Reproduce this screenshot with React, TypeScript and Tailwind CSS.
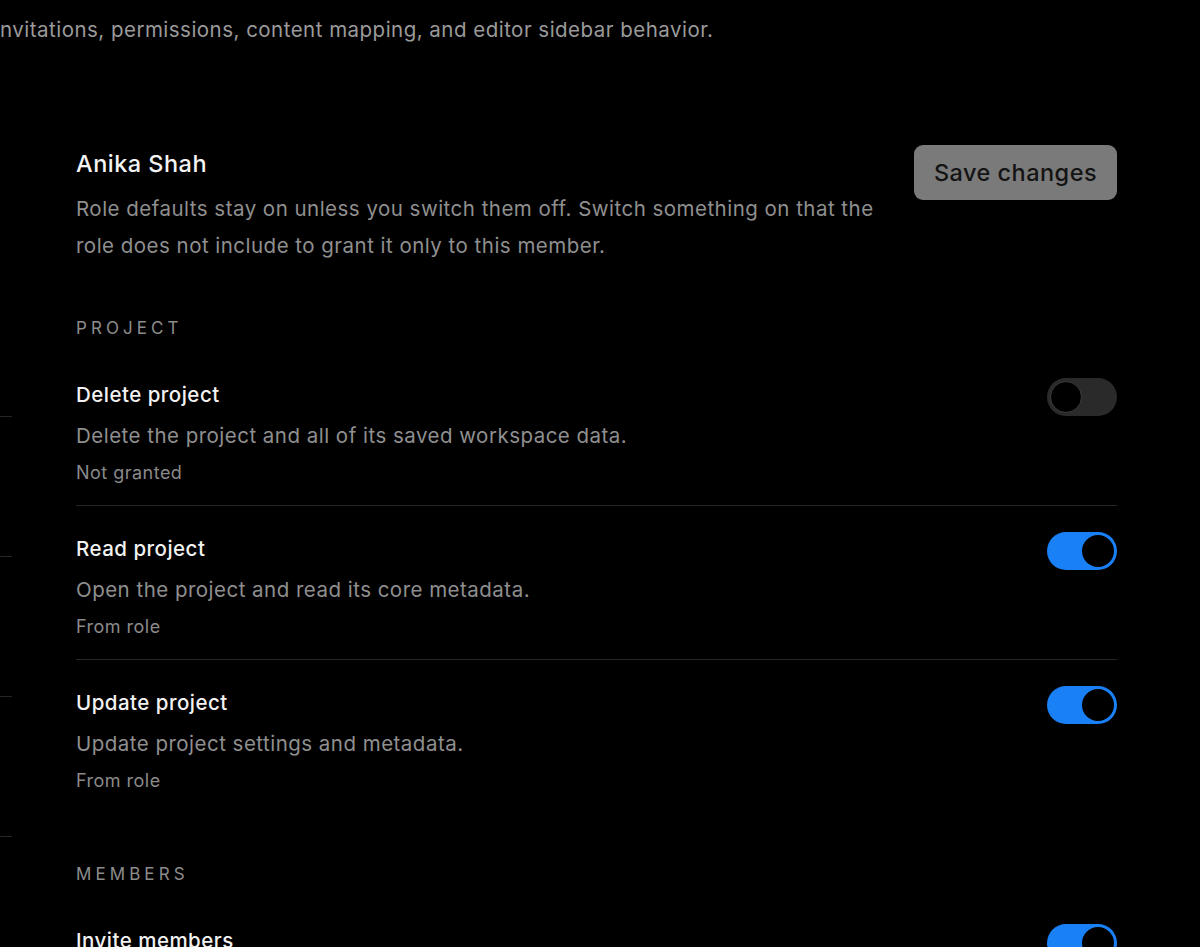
import React, { useState } from 'react';

type Permission = {
  id: string;
  title: string;
  description: string;
  enabled: boolean;
  source: string;
};

type Section = {
  label: string;
  items: Permission[];
};

const sections: Section[] = [
  {
    label: 'Project',
    items: [
      {
        id: 'project.delete',
        title: 'Delete project',
        description: 'Delete the project and all of its saved workspace data.',
        enabled: false,
        source: 'Not granted',
      },
      {
        id: 'project.read',
        title: 'Read project',
        description: 'Open the project and read its core metadata.',
        enabled: true,
        source: 'From role',
      },
      {
        id: 'project.update',
        title: 'Update project',
        description: 'Update project settings and metadata.',
        enabled: true,
        source: 'From role',
      },
    ],
  },
  {
    label: 'Members',
    items: [
      {
        id: 'members.invite',
        title: 'Invite members',
        description: 'Send invitations to new members of this project.',
        enabled: true,
        source: 'From role',
      },
    ],
  },
];

const Toggle: React.FC<{ on: boolean; onChange: () => void }> = ({ on, onChange }) => (
  <button
    type="button"
    role="switch"
    aria-checked={on}
    onClick={onChange}
    className={`mt-[-3px] flex h-[38px] w-[70px] shrink-0 items-center rounded-full p-[3px] ${
      on ? 'justify-end bg-[#1a80f6]' : 'justify-start bg-[#2a2a2a]'
    }`}
  >
    <span
      className={`h-[32px] w-[32px] rounded-full bg-black ${on ? '' : 'border border-[#3c3c3c]'}`}
    />
  </button>
);

export default function App() {
  const [values, setValues] = useState<Record<string, boolean>>(() => {
    const v: Record<string, boolean> = {};
    sections.forEach((s) => s.items.forEach((i) => (v[i.id] = i.enabled)));
    return v;
  });

  return (
    <div className="h-[947px] overflow-hidden bg-black font-['Inter','Liberation_Sans',sans-serif] tracking-[0.03em] antialiased">
      {/* page intro, scrolled off to the left */}
      <p className="pt-[17px] text-[20.5px] leading-[26px] whitespace-nowrap text-[#9a9a9a]">
        nvitations, permissions, content mapping, and editor sidebar behavior.
      </p>

      <div className="flex">
        {/* edge of member list */}
        <div className="mt-[373px] w-[12px] shrink-0">
          <div className="h-[140px] border-t border-[#262626]" />
          <div className="h-[140px] border-t border-[#262626]" />
          <div className="h-[140px] border-t border-[#262626]" />
          <div className="h-[140px] border-t border-[#262626]" />
        </div>

        <div className="ml-[64px] w-[1041px]">
          {/* header */}
          <div className="mt-[102px] flex items-start justify-between">
            <div className="w-[830px]">
              <h2 className="text-[23.5px] leading-[38px] font-medium text-[#f4f4f4]">Anika Shah</h2>
              <p className="mt-[7px] text-[20.5px] leading-[37px] text-[#8f8f8f]">
                Role defaults stay on unless you switch them off. Switch something on that the role does not include to grant it only to this member.
              </p>
            </div>
            <button
              type="button"
              className="h-[55px] w-[203px] rounded-[9px] bg-[#7a7a7a] text-[23.5px] font-medium tracking-[0.02em] text-[#141414]"
            >
              Save changes
            </button>
          </div>

          {sections.map((section, sIdx) => (
            <section key={section.label} className={sIdx === 0 ? 'mt-[54px]' : 'mt-[51px]'}>
              <h3 className="mb-[14px] text-[17px] leading-[20px] tracking-[0.24em] uppercase text-[#8c8c8c]">
                {section.label}
              </h3>
              {section.items.map((item, idx) => (
                <div
                  key={item.id}
                  className={`flex items-start justify-between pt-[29px] pb-[20px] ${
                    idx < section.items.length - 1 ? 'border-b border-[#262626]' : ''
                  }`}
                >
                  <div>
                    <div className="text-[20.5px] leading-[28px] font-medium text-[#f2f2f2]">{item.title}</div>
                    <div className="mt-[12px] text-[20.5px] leading-[30px] text-[#8f8f8f]">{item.description}</div>
                    <div className="mt-[10px] text-[18px] leading-[24px] text-[#8a8a8a]">{item.source}</div>
                  </div>
                  <Toggle
                    on={values[item.id]}
                    onChange={() => setValues((v) => ({ ...v, [item.id]: !v[item.id] }))}
                  />
                </div>
              ))}
            </section>
          ))}
        </div>
      </div>
    </div>
  );
}
